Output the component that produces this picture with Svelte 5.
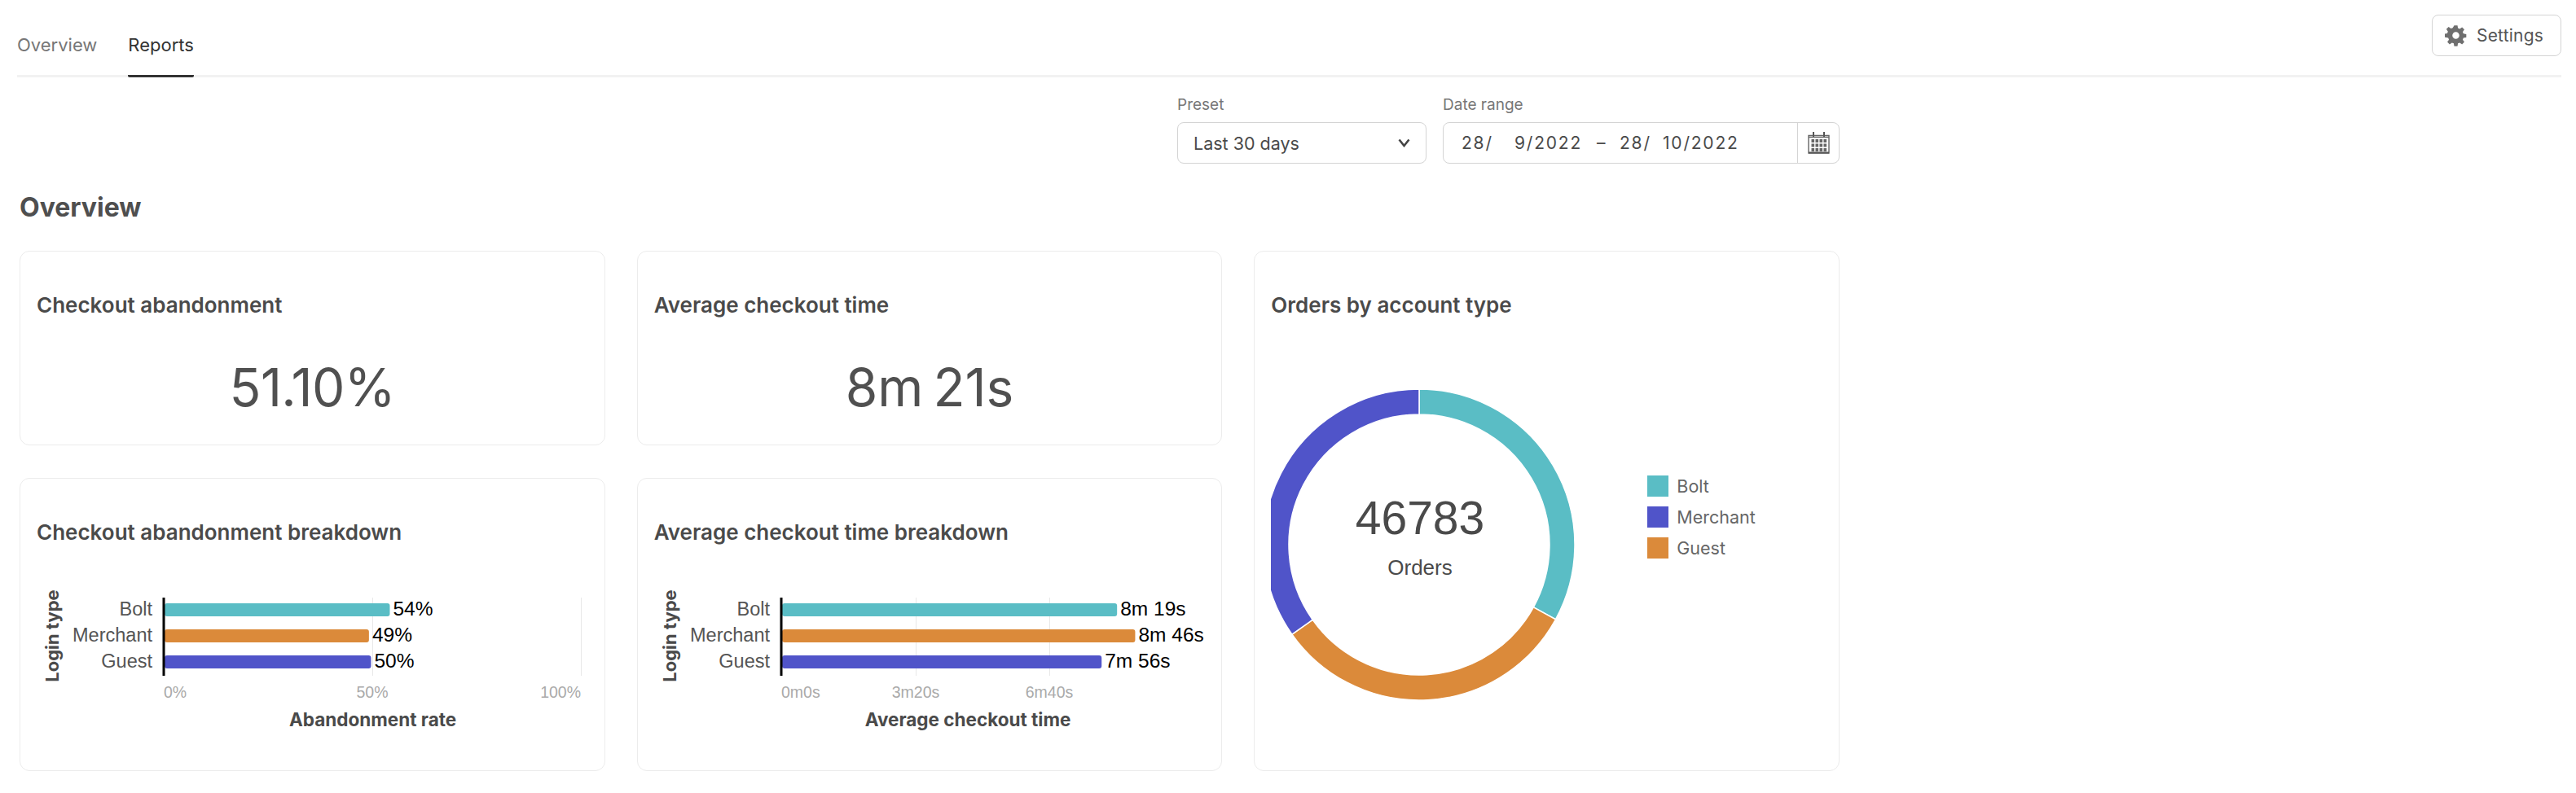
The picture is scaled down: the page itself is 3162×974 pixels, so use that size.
<script lang="ts">
  type Bar = { label: string; value: number; text: string; color: string };
  type Tick = { label: string; x: number; anchor: string };

  const teal = '#5abdc5';
  const indigo = '#5054c9';
  const orange = '#db8a3a';

  const rateBars: Bar[] = [
    { label: 'Bolt', value: 54, text: '54%', color: teal },
    { label: 'Merchant', value: 49, text: '49%', color: orange },
    { label: 'Guest', value: 49.5, text: '50%', color: indigo }
  ];
  const timeBars: Bar[] = [
    { label: 'Bolt', value: 499, text: '8m 19s', color: teal },
    { label: 'Merchant', value: 526, text: '8m 46s', color: orange },
    { label: 'Guest', value: 476, text: '7m 56s', color: indigo }
  ];

  const charts = [
    {
      title: 'Checkout abandonment breakdown',
      axis: 'Abandonment rate',
      bars: rateBars,
      scale: 5.12,
      grid: [256, 512],
      ticks: [
        { label: '0%', x: 0, anchor: 'start' },
        { label: '50%', x: 256, anchor: 'middle' },
        { label: '100%', x: 512, anchor: 'end' }
      ] as Tick[]
    },
    {
      title: 'Average checkout time breakdown',
      axis: 'Average checkout time',
      bars: timeBars,
      scale: 0.824,
      grid: [165, 329],
      ticks: [
        { label: '0m0s', x: 0, anchor: 'start' },
        { label: '3m20s', x: 165, anchor: 'middle' },
        { label: '6m40s', x: 329, anchor: 'middle' }
      ] as Tick[]
    }
  ];

  const legend = [
    { label: 'Bolt', color: teal },
    { label: 'Merchant', color: indigo },
    { label: 'Guest', color: orange }
  ];

  const cx = 182;
  const cy = 191;

  function point(r: number, deg: number) {
    const a = (deg * Math.PI) / 180;
    return `${cx + r * Math.sin(a)} ${cy - r * Math.cos(a)}`;
  }

  function arc(from: number, to: number) {
    const large = to - from > 180 ? 1 : 0;
    return `M${point(191, from)}A191 191 0 ${large} 1 ${point(191, to)}L${point(160, to)}A160 160 0 ${large} 0 ${point(160, from)}Z`;
  }

  const slices = [
    { d: arc(0, 118.7), color: teal },
    { d: arc(118.7, 234.8), color: orange },
    { d: arc(234.8, 360), color: indigo }
  ];

  const calCols = [0, 5, 10, 15];
  const calRows = [0, 5.5, 11];
</script>

<div class="page">
  <header class="topbar">
    <nav class="tabs">
      <span class="tab">Overview</span>
      <span class="tab tab--active">Reports</span>
    </nav>
    <button class="settings">
      <svg class="gear" viewBox="0 0 24 24" width="27" height="27" aria-hidden="true">
        <path fill="#6f6f6f" fill-rule="evenodd" d="M10.2 1h3.6l.5 3.1 1.9.8 2.6-1.8 2.5 2.5-1.8 2.6.8 1.9 3.1.5v3.6l-3.1.5-.8 1.9 1.8 2.6-2.5 2.5-2.6-1.8-1.9.8-.5 3.1h-3.6l-.5-3.1-1.9-.8-2.6 1.8-2.5-2.5 1.8-2.6-.8-1.9L-.5 13.8v-3.6l3.1-.5.8-1.9-1.8-2.6 2.5-2.5 2.6 1.8 1.9-.8zM12 8.2a3.8 3.8 0 1 0 0 7.6 3.8 3.8 0 0 0 0-7.6z"/>
      </svg>
      Settings
    </button>
  </header>

  <section class="filters">
    <div class="field">
      <span class="field__label">Preset</span>
      <div class="select">
        Last 30 days
        <svg viewBox="0 0 15 11" width="15" height="11" aria-hidden="true">
          <path d="M1.5 1.5 7.5 9l6-7.5" fill="none" stroke="#444" stroke-width="2.6"/>
        </svg>
      </div>
    </div>
    <div class="field">
      <span class="field__label">Date range</span>
      <div class="dates">
        <div class="dates__text">
          <span class="d1">28/</span><span class="d2">9/2022</span>
          <span class="dash">–</span>
          <span class="d4">28/</span><span class="d5">10/2022</span>
        </div>
        <div class="dates__icon">
          <svg viewBox="0 0 27 27" width="27" height="27" aria-hidden="true">
            <path d="M1 4.5h25v21.5H1z" fill="none" stroke="#666" stroke-width="1.4"/>
            <path d="M1 25.5h25" stroke="#555" stroke-width="2"/>
            <path d="M7 0v6M20 0v6" stroke="#555" stroke-width="2"/>
            <path d="M1 6.5h25" stroke="#666" stroke-width="1.4"/>
            <g transform="translate(4.5 9)">
              {#each calRows as y}
                {#each calCols as x}
                  <rect {x} {y} width="3.6" height="4" fill="#666"/>
                {/each}
              {/each}
            </g>
          </svg>
        </div>
      </div>
    </div>
  </section>

  <h1 class="heading">Overview</h1>

  <main class="grid">
    <article class="card card--stat">
      <h2>Checkout abandonment</h2>
      <p class="stat stat--rate">51.10%</p>
    </article>
    <article class="card card--stat">
      <h2>Average checkout time</h2>
      <p class="stat stat--time">8m 21s</p>
    </article>
    <article class="card card--donut">
      <h2>Orders by account type</h2>
      <div class="donut-row">
        <svg class="donut" viewBox="0 0 380 382" width="380" height="382">
          {#each slices as s}
            <path d={s.d} fill={s.color} stroke="#fff" stroke-width="1.5"/>
          {/each}
          <text x={cx + 1} y="178" text-anchor="middle" class="donut__num">46783</text>
          <text x={cx + 1} y="228" text-anchor="middle" class="donut__sub">Orders</text>
        </svg>
        <ul class="legend">
          {#each legend as l}
            <li><i style="background: {l.color}"></i>{l.label}</li>
          {/each}
        </ul>
      </div>
    </article>

    {#each charts as c}
      <article class="card card--chart">
        <h2>{c.title}</h2>
        <svg class="chart" viewBox="0 0 700 140" width="700" height="140">
          <text class="chart__side" transform="translate(47 56) rotate(-90)" text-anchor="middle">Login type</text>
          <g transform="translate(176 9)">
            {#each c.grid as g}
              <path d="M{g + 0.5} 0V96" stroke="#e8e8e8" stroke-width="1"/>
            {/each}
            {#each c.bars as b, i}
              <text class="chart__cat" x="-14" y={22 + i * 32} text-anchor="end">{b.label}</text>
              <rect x="1" y={7 + i * 32} width={b.value * c.scale} height="16" rx="3" fill={b.color}/>
              <text class="chart__val" x={b.value * c.scale + 5} y={22 + i * 32}>{b.text}</text>
            {/each}
            <path d="M0 0V96" stroke="#000" stroke-width="3"/>
            {#each c.ticks as t}
              <text class="chart__tick" x={t.x} y="123" text-anchor={t.anchor}>{t.label}</text>
            {/each}
          </g>
        </svg>
        <p class="chart__axis" class:chart__axis--time={c.scale < 1}>{c.axis}</p>
      </article>
    {/each}
  </main>
</div>

<style>
  :global(body) {
    margin: 0;
    background: #fff;
  }

  .page {
    width: 3162px;
    height: 974px;
    box-sizing: border-box;
    padding: 18px 18px 0 21px;
    font-family: Inter, "Liberation Sans", sans-serif;
    color: #4a4a4a;
    overflow: hidden;
  }

  .topbar {
    display: flex;
    justify-content: space-between;
    align-items: flex-start;
    height: 74px;
    border-bottom: 3px solid #f2f2f2;
  }

  .tabs {
    display: flex;
    gap: 38px;
    height: 74px;
    font-size: 22px;
  }

  .tab {
    color: #777;
    padding-top: 24px;
    line-height: 26px;
    box-sizing: border-box;
  }

  .tab--active {
    color: #333;
    height: 77px;
    border-bottom: 3px solid #333;
    border-radius: 0 0 2px 2px;
  }

  .settings {
    display: flex;
    align-items: center;
    gap: 12px;
    height: 51px;
    width: 159px;
    padding: 0 0 0 15px;
    box-sizing: border-box;
    background: #fff;
    border: 1.5px solid #d4d4d4;
    border-radius: 8px;
    font: inherit;
    font-size: 21px;
    letter-spacing: 0.2px;
    color: #555;
  }

  .filters {
    display: flex;
    gap: 20px;
    margin: 21px 0 0 1424px;
  }

  .field {
    display: flex;
    flex-direction: column;
    gap: 8px;
  }

  .field__label {
    font-size: 19px;
    line-height: 26px;
    color: #777;
  }

  .select,
  .dates {
    height: 51px;
    box-sizing: border-box;
    border: 1.5px solid #d4d4d4;
    border-radius: 8px;
    display: flex;
    align-items: center;
    font-size: 21.5px;
    color: #4a4a4a;
  }

  .select {
    width: 306px;
    padding: 0 19px 0 19px;
    justify-content: space-between;
  }

  .dates {
    width: 487px;
    justify-content: space-between;
  }

  .dates__text {
    display: flex;
    padding-left: 22px;
    font-size: 21px;
    letter-spacing: 1.8px;
    white-space: nowrap;
  }

  .d1 { width: 65px; }
  .d2 { width: 101px; }
  .dash { width: 28px; }
  .d4 { width: 53px; }

  .dates__icon {
    width: 51px;
    height: 100%;
    border-left: 1.5px solid #d4d4d4;
    display: flex;
    align-items: center;
    justify-content: center;
    box-sizing: border-box;
  }

  .heading {
    margin: 34px 0 33px 3px;
    font-size: 32px;
    line-height: 40px;
    font-weight: 700;
    color: #4f4f4f;
  }

  .grid {
    margin-left: 3px;
    width: 2234px;
    display: grid;
    grid-template-columns: repeat(3, 1fr);
    grid-template-rows: 239px 360px;
    gap: 40px 39px;
  }

  .card {
    box-sizing: border-box;
    border: 1.5px solid #ececec;
    border-radius: 12px;
    padding: 49px 20px 0;
    overflow: hidden;
  }

  h2 {
    margin: 0;
    font-size: 26px;
    line-height: 34px;
    font-weight: 600;
    color: #4a4a4a;
  }

  .stat {
    margin: 44px 0 0;
    text-align: center;
    font-size: 64px;
    line-height: 80px;
    color: #505050;
  }

  .stat--rate {
    letter-spacing: -0.6px;
  }

  .stat--time {
    word-spacing: -6px;
  }

  .card--donut {
    grid-column: 3;
    grid-row: 1 / span 2;
  }

  .grid > .card--chart:nth-child(4) {
    grid-column: 1;
    grid-row: 2;
  }

  .grid > .card--chart:nth-child(5) {
    grid-column: 2;
    grid-row: 2;
  }

  .donut-row {
    display: flex;
    align-items: center;
    margin-top: 86px;
  }

  .donut {
    flex: none;
    display: block;
  }

  .donut__num {
    font-family: "Liberation Sans", sans-serif;
    font-size: 57px;
    fill: #4a4a4a;
  }

  .donut__sub {
    font-family: "Liberation Sans", sans-serif;
    font-size: 26px;
    fill: #4a4a4a;
  }

  .legend {
    list-style: none;
    margin: -68px 0 0 82px;
    padding: 0;
    display: flex;
    flex-direction: column;
    gap: 12.3px;
    font-size: 21.5px;
    color: #666;
  }

  .legend li {
    display: flex;
    align-items: center;
    gap: 10px;
    height: 26px;
  }

  .legend i {
    width: 26px;
    height: 26px;
    display: block;
  }

  .chart {
    display: block;
    margin: 54px 0 0 -20px;
  }

  .chart__side {
    font-size: 22px;
    font-weight: 700;
    fill: #4a4a4a;
  }

  .chart__cat {
    font-family: "Liberation Sans", sans-serif;
    font-size: 23.5px;
    fill: #555;
  }

  .chart__val {
    font-family: "Liberation Sans", sans-serif;
    font-size: 24.5px;
    fill: #000;
  }

  .chart__tick {
    font-family: "Liberation Sans", sans-serif;
    font-size: 19.5px;
    fill: #aaa;
  }

  .chart__axis {
    margin: 4px 0 0;
    padding-left: 310px;
    font-size: 22.5px;
    font-weight: 700;
    color: #4a4a4a;
    line-height: 30px;
  }

  .chart__axis--time {
    padding-left: 259px;
  }
</style>
